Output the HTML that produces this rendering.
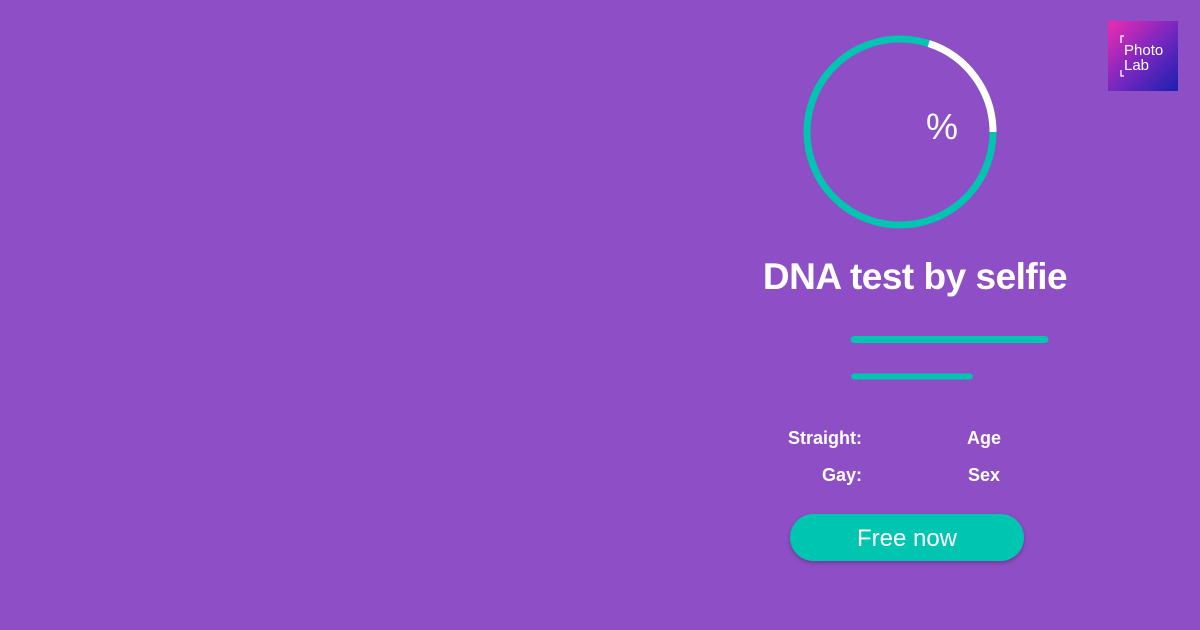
<!DOCTYPE html>
<html><head><style>
body{margin:0;width:1200px;height:630px;background:#8e4ec6;font-family:"Liberation Sans",Roboto,sans-serif;position:relative;overflow:hidden;color:#fff}
.a{position:absolute}
</style></head><body>
<svg class="a" style="left:0;top:0" width="1200" height="630">
<defs><linearGradient id="g" x1="0" y1="0" x2="1" y2="1"><stop offset="0" stop-color="#f02ab0"/><stop offset="0.5" stop-color="#7a28c0"/><stop offset="1" stop-color="#1a1fb0"/></linearGradient></defs>
<circle cx="900" cy="132" r="93" fill="none" stroke="#00c5b0" stroke-width="7"/>
<path d="M928.7 43.5 A93 93 0 0 1 993 132" fill="none" stroke="#fff" stroke-width="7"/>
<text x="942" y="139" font-size="36" fill="#fff" text-anchor="middle" font-family="Liberation Sans, sans-serif">%</text>
<rect x="1108" y="21" width="70" height="70" fill="url(#g)"/>
<path d="M1124 36h-3v7M1124 76h-3v-6" fill="none" stroke="#fff" stroke-width="1.3"/>
<text x="1124" y="55" font-size="15" fill="#fff">Photo</text>
<text x="1124" y="70" font-size="15" fill="#fff">Lab</text>
<line x1="854" y1="339.5" x2="1045" y2="339.5" stroke="#00c5b0" stroke-width="7" stroke-linecap="round"/>
<line x1="854" y1="376.5" x2="970" y2="376.5" stroke="#00c5b0" stroke-width="6" stroke-linecap="round"/>
</svg>
<div class="a" style="left:715px;top:256px;width:400px;text-align:center;font-size:37px;font-weight:bold;letter-spacing:-0.5px">DNA test by selfie</div>
<div class="a" style="left:700px;top:428px;width:162px;text-align:right;font-size:18px;font-weight:bold">Straight:</div>
<div class="a" style="left:700px;top:465px;width:162px;text-align:right;font-size:18px;font-weight:bold">Gay:</div>
<div class="a" style="left:940px;top:428px;width:88px;text-align:center;font-size:18px;font-weight:bold">Age</div>
<div class="a" style="left:940px;top:465px;width:88px;text-align:center;font-size:18px;font-weight:bold">Sex</div>
<div class="a" style="left:790px;top:514px;width:234px;height:47px;border-radius:24px;background:#00c5b0;box-shadow:0 2px 4px rgba(0,0,0,.25);text-align:center;line-height:49px;font-size:24px">Free now</div>
</body></html>
